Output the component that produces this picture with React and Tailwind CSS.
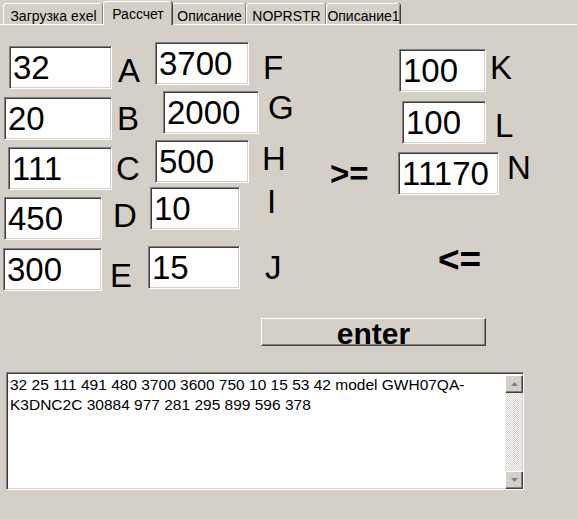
const sunken =
  "bg-white border-t border-l border-b border-r border-t-[#808080] border-l-[#808080] border-b-white border-r-white shadow-[inset_1px_1px_0_#404040,inset_-1px_-1px_0_#d4d0c8]";

function Field({ value, w, ml, mt, label, labelMl, labelDy = 0 }) {
  return (
    <div className="flex items-center" style={{ marginTop: mt, marginLeft: ml }}>
      <div
        className={`${sunken} h-[43px] flex items-center pl-[3px] text-[33px] leading-none text-black whitespace-nowrap overflow-hidden`}
        style={{ width: w }}
      >
        {value}
      </div>
      <div
        className="text-[33px] leading-none text-black"
        style={{ marginLeft: labelMl, transform: `translateY(${labelDy}px)` }}
      >
        {label}
      </div>
    </div>
  );
}

function Tab({ children, active, w }) {
  return (
    <div
      className={
        active
          ? "relative z-10 h-[24px] -mb-px bg-[#d4d0c8] border-t border-l border-white rounded-t-[3px] shadow-[inset_-1px_0_0_#808080,1px_0_0_#404040] flex items-start justify-center pt-[2px] text-[14px] text-black whitespace-nowrap"
          : "h-[21px] bg-[#d4d0c8] border-t border-l border-white rounded-t-[3px] shadow-[inset_-1px_0_0_#808080,1px_0_0_#404040] flex items-start justify-center pt-[2px] text-[14px] text-black whitespace-nowrap"
      }
      style={{ width: w }}
    >
      {children}
    </div>
  );
}

export default function App() {
  return (
    <div className="w-[577px] h-[519px] bg-[#d4d0c8] overflow-hidden font-['Liberation_Sans',Arial,sans-serif] select-none">
      {/* tabs */}
      <div className="flex items-end h-[24px] pl-[3px]">
        <Tab w={100}>Загрузка exel</Tab>
        <Tab w={69} active>Рассчет</Tab>
        <Tab w={74}>Описание</Tab>
        <Tab w={80}>NOPRSTR</Tab>
        <Tab w={74}>Описание1</Tab>
      </div>
      <div className="h-px bg-white" />

      {/* fields */}
      <div className="flex items-start">
        <div className="w-[148px] flex flex-col">
          <Field value="32" w={103} ml={9} mt={21} label="A" labelMl={6} labelDy={3} />
          <Field value="20" w={108} ml={4} mt={8} label="B" labelMl={5} />
          <Field value="111" w={104} ml={8} mt={7} label="C" labelMl={4} />
          <Field value="450" w={98} ml={4} mt={7} label="D" labelMl={11} labelDy={-3} />
          <Field value="300" w={99} ml={3} mt={8} label="E" labelMl={8} labelDy={6} />
        </div>
        <div className="w-[182px] flex flex-col">
          <Field value="3700" w={94} ml={7} mt={17} label="F" labelMl={14} labelDy={4} />
          <Field value="2000" w={96} ml={15} mt={6} label="G" labelMl={9} labelDy={-5} />
          <Field value="500" w={94} ml={7} mt={6} label="H" labelMl={13} labelDy={-3} />
          <Field value="10" w={90} ml={2} mt={4} label="I" labelMl={27} labelDy={-7} />
          <Field value="15" w={92} ml={0} mt={16} label="J" labelMl={25} />
        </div>
        <div className="flex flex-col">
          <Field value="100" w={87} ml={69} mt={24} label="K" labelMl={4} labelDy={-3} />
          <Field value="100" w={84} ml={72} mt={9} label="L" labelMl={9} labelDy={3} />
          <div className="flex items-center mt-[8px]">
            <div className="w-[38px] text-[33px] font-bold leading-none">&gt;=</div>
            <div className="ml-[30px]">
              <Field value="11170" w={101} ml={0} mt={0} label="N" labelMl={8} labelDy={-6} />
            </div>
          </div>
          <div className="ml-[108px] mt-[46px] text-[37px] font-bold leading-none">&lt;=</div>
        </div>
      </div>

      {/* enter button */}
      <button className="block ml-[261px] mt-[27px] w-[225px] h-[28px] bg-[#d4d0c8] border-t border-l border-b border-r border-t-white border-l-white border-b-[#404040] border-r-[#404040] shadow-[inset_-1px_-1px_0_#808080] text-[30px] font-bold leading-none text-black pb-[2px]">
        enter
      </button>

      {/* memo */}
      <div className={`ml-[6px] mt-[26px] w-[518px] h-[118px] flex ${sunken}`}>
        <div className="flex-1 px-[3px] pt-[2px] text-[15.5px] leading-[20px] text-black whitespace-nowrap">
          32 25 111 491 480 3700 3600 750 10 15 53 42 model GWH07QA-
          <br />
          K3DNC2C 30884 977 281 295 899 596 378
        </div>
        <div className="w-[17px] mt-[2px] mb-px mr-px flex flex-col bg-[repeating-conic-gradient(#d4d0c8_0%_25%,#ffffff_0%_50%)] bg-[length:2px_2px]">
          <div className="h-[17px] bg-[#d4d0c8] border-t border-l border-white shadow-[inset_-1px_-1px_0_#808080,1px_1px_0_#404040] flex items-center justify-center">
            <svg width="7" height="4" viewBox="0 0 7 4">
              <path d="M3.5 0L7 4H0z" fill="#808080" />
            </svg>
          </div>
          <div className="flex-1" />
          <div className="h-[17px] bg-[#d4d0c8] border-t border-l border-white shadow-[inset_-1px_-1px_0_#808080,1px_1px_0_#404040] flex items-center justify-center">
            <svg width="7" height="4" viewBox="0 0 7 4">
              <path d="M0 0H7L3.5 4z" fill="#808080" />
            </svg>
          </div>
        </div>
      </div>
    </div>
  );
}
